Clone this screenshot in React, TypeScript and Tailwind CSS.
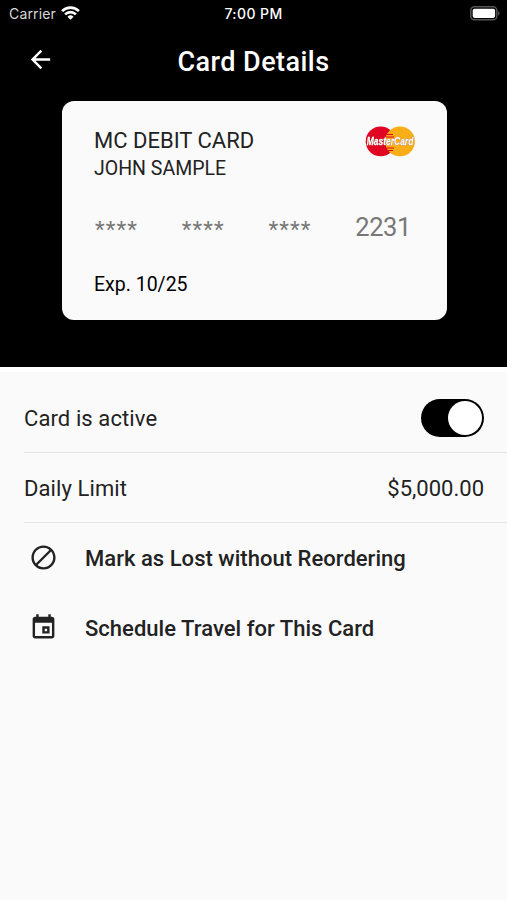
import type { ReactNode } from 'react';
import { MdArrowBack, MdDoNotDisturbAlt } from 'react-icons/md';

const card = {
  name: 'MC DEBIT CARD',
  holder: 'JOHN SAMPLE',
  lastFour: '2231',
  expires: '10/25',
  dailyLimit: '$5,000.00',
};

export default function App() {
  return (
    <div className="h-[900px] w-[507px] overflow-hidden bg-[#fafafa] font-['Roboto',sans-serif] text-[#222]">
      <header className="h-[367px] bg-black text-white">
        <StatusBar />

        <div className="grid h-[66px] grid-cols-[1fr_auto_1fr] items-center px-[26px]">
          <button aria-label="Back" className="w-fit pb-[2px]">
            <MdArrowBack size={29} />
          </button>
          <h1 className="pt-1 text-[27px] font-medium leading-8 tracking-[0.45px]">Card Details</h1>
        </div>

        <BankCard />
      </header>

      <main className="border-t-[5px] border-white">
        <Row label="Card is active">
          <button role="switch" aria-checked="true" aria-label="Card is active" className="flex h-[38px] w-[63px] items-center justify-end rounded-full bg-black pr-[2px]">
            <span className="size-[34px] rounded-full bg-white" />
          </button>
        </Row>
        <Row label="Daily Limit">
          <span className="pt-[1px] text-[22px]">{card.dailyLimit}</span>
        </Row>

        <Action icon={<MdDoNotDisturbAlt size={29} />} label="Mark as Lost without Reordering" />
        <Action icon={<CalendarIcon />} label="Schedule Travel for This Card" />
      </main>
    </div>
  );
}

function StatusBar() {
  return (
    <div className="grid h-[27px] grid-cols-[1fr_auto_1fr] items-center px-[7px] font-['Inter',sans-serif] text-[14px]">
      <div className="flex items-center gap-[5px] pl-[2px] text-[#d8d8d8]">
        <span className="tracking-[0.15px]">Carrier</span>
        <svg className="-mt-[2px]" width="19" height="14" viewBox="0 0 19 14" fill="none" stroke="#fff" strokeWidth="2.7">
          <path d="M1.1 5.1a12 12 0 0 1 16.8 0" />
          <path d="M4.1 8.4a7.7 7.7 0 0 1 10.8 0" />
          <path d="M9.5 13.8 6.5 10.7a4.4 4.4 0 0 1 6 0z" fill="#fff" stroke="none" />
        </svg>
      </div>
      <span className="font-medium tracking-[0.4px]">7:00 PM</span>
      <svg className="justify-self-end" width="30" height="15" viewBox="0 0 30 15">
        <rect x="0.8" y="0.8" width="26" height="13" rx="3.6" fill="none" stroke="#555" strokeWidth="1.5" />
        <rect x="2.7" y="2.7" width="22.4" height="9.2" rx="1.8" fill="#fff" />
        <path d="M28.1 5c2 .6 2 4 0 4.6z" fill="#555" />
      </svg>
    </div>
  );
}

function BankCard() {
  return (
    <section className="ml-[62px] mt-2 h-[219px] w-[385px] rounded-xl bg-[#fafafa] px-8 pt-[25px] text-[#222]">
      <div className="flex h-[56px] justify-between">
        <div>
          <h2 className="text-[22px] leading-[29px]">{card.name}</h2>
          <p className="text-[19.5px] leading-[28px]">{card.holder}</p>
        </div>
        <MasterCardLogo />
      </div>

      <div className="mt-[29px] flex h-8 items-center justify-between pl-[1px] pr-[4px] text-[25.5px] text-[#777]">
        <Stars />
        <Stars />
        <Stars />
        <span className="tracking-[-0.4px]">{card.lastFour}</span>
      </div>

      <p className="mt-[30px] text-[19.5px] leading-6 text-black">Exp. {card.expires}</p>
    </section>
  );
}

function Stars() {
  return <span className="w-[44px] pt-[5px] text-[22.5px] tracking-[1.1px]">****</span>;
}

function MasterCardLogo() {
  return (
    <svg className="overflow-visible" width="50" height="31" viewBox="0 0 50 31">
      <circle cx="15.6" cy="15.4" r="14.9" fill="#e00522" />
      <circle cx="35" cy="15.4" r="14.9" fill="#f9ae18" />
      <path d="M22 8.5h6M21 11h8M21 22h8M22 24.5h6" stroke="#e00522" strokeWidth="1.1" />
      <text
        x="1.8"
        y="19.4"
        textLength="46.5"
        lengthAdjust="spacingAndGlyphs"
        fill="#fff"
        stroke="#fff"
        strokeWidth="0.3"
        className="font-['Liberation_Sans',sans-serif] text-[11.2px] font-bold italic [filter:drop-shadow(0.6px_0.6px_0_#7a3a22)]"
      >
        MasterCard
      </text>
    </svg>
  );
}

function Row({ label, children }: { label: string; children: ReactNode }) {
  return (
    <div className="ml-[24px] flex h-[70px] items-center justify-between border-b border-[#e4e4e4] pr-[23px] first:h-[81px] first:pt-3">
      <span className="pt-[1px] text-[22px] tracking-[0.1px]">{label}</span>
      {children}
    </div>
  );
}

function Action({ icon, label }: { icon: ReactNode; label: string }) {
  return (
    <button className="flex h-[70px] w-full items-center gap-[27px] pl-[29px] text-left text-[22px] font-medium">
      <span className="pb-[2px]">{icon}</span>
      <span className="tracking-[0.03px]">{label}</span>
    </button>
  );
}

function CalendarIcon() {
  return (
    <svg width="29" height="29" viewBox="0 0 24 24" fill="currentColor" fillRule="evenodd">
      <path d="M19 3h-1V1h-2v2H8V1H6v2H5c-1.1 0-2 .9-2 2v14c0 1.1.9 2 2 2h14c1.1 0 2-.9 2-2V5c0-1.1-.9-2-2-2zm0 16H5V8h14v11z" />
      <path d="M11 11h6v6h-6zM13 13v2h2v-2z" />
    </svg>
  );
}
